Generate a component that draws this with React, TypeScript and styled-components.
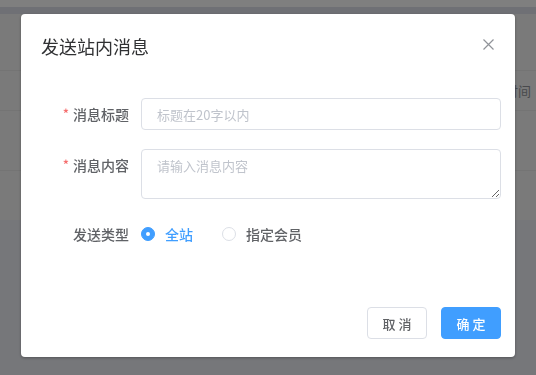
import React from "react";
import styled, { createGlobalStyle } from "styled-components";

const Global = createGlobalStyle`
  html, body { margin: 0; padding: 0; }
  body {
    width: 536px; height: 375px; overflow: hidden;
    font-family: "Noto Sans CJK SC", "Noto Sans", sans-serif;
    background: #eceef5;
  }
  * { box-sizing: border-box; }
`;

const Page = styled.div`
  width: 536px;
  height: 375px;
  display: flex;
  flex-direction: column;
  background: #eceef5;
`;

const TopStrip = styled.div`
  height: 7px;
  background: #ffffff;
`;

const NavStrip = styled.div`
  height: 7px;
  background: #dfe0ea;
`;

const Content = styled.div`
  height: 206px;
  background: #f5f5f5;
  display: flex;
  flex-direction: column;
`;

const Row = styled.div<{ $h: number; $line?: boolean }>`
  height: ${(p) => p.$h}px;
  border-bottom: ${(p) => (p.$line ? "1px solid #e8e8e8" : "none")};
  display: flex;
  align-items: center;
  justify-content: flex-end;
  padding-right: 5px;
  font-size: 13px;
  color: #909399;
`;

const Mask = styled.div`
  position: fixed;
  inset: 0;
  background: rgba(0, 0, 0, 0.5);
  padding: 14px 0 0 21px;
`;

const Dialog = styled.div`
  width: 494px;
  height: 343px;
  background: #fff;
  border-radius: 4px;
  box-shadow: 0 1px 3px rgba(0, 0, 0, 0.3);
  display: flex;
  flex-direction: column;
`;

const Header = styled.div`
  padding: 20px 20px 10px 20px;
  display: flex;
  align-items: center;
  justify-content: space-between;
`;

const Title = styled.span`
  font-size: 18px;
  line-height: 24px;
  color: #303133;
`;

const Close = styled.button`
  border: none;
  background: none;
  padding: 0;
  width: 12px;
  height: 12px;
  margin-right: 1px;
  margin-top: -4px;
  display: flex;
  align-items: center;
  justify-content: center;
  cursor: pointer;
`;

const Body = styled.div`
  padding: 30px 14px 0 20px;
  display: flex;
  flex-direction: column;
`;

const Item = styled.div<{ $mb: number }>`
  display: flex;
  align-items: flex-start;
  margin-bottom: ${(p) => p.$mb}px;
`;

const Label = styled.label`
  width: 100px;
  padding-right: 12px;
  height: 32px;
  display: flex;
  align-items: center;
  justify-content: flex-end;
  font-size: 14px;
  color: #606266;
  font-weight: 500;
`;

const Star = styled.span`
  color: #f56c6c;
  margin-right: 4px;
  font-size: 13px;
  margin-top: -2px;
`;

const Input = styled.input`
  width: 360px;
  height: 32px;
  border: 1px solid #dcdfe6;
  border-radius: 4px;
  padding: 0 15px;
  font-size: 13px;
  font-family: inherit;
  color: #606266;
  outline: none;
  &::placeholder { color: #c0c4cc; }
`;

const TextArea = styled.textarea`
  width: 360px;
  height: 50px;
  border: 1px solid #dcdfe6;
  border-radius: 4px;
  padding: 5px 15px;
  font-size: 13px;
  line-height: 21px;
  font-family: inherit;
  color: #606266;
  outline: none;
  resize: vertical;
  &::placeholder { color: #c0c4cc; }
`;

const RadioGroup = styled.div`
  height: 32px;
  display: flex;
  align-items: center;
`;

const RadioLabel = styled.label`
  display: flex;
  align-items: center;
  margin-right: 29px;
  cursor: pointer;
`;

const Dot = styled.span<{ $on: boolean }>`
  width: 14px;
  height: 14px;
  border-radius: 50%;
  border: 1px solid ${(p) => (p.$on ? "#409eff" : "#dcdfe6")};
  background: ${(p) => (p.$on ? "#409eff" : "#fff")};
  display: flex;
  align-items: center;
  justify-content: center;
  &::after {
    content: "";
    width: 4px;
    height: 4px;
    border-radius: 50%;
    background: #fff;
    display: ${(p) => (p.$on ? "block" : "none")};
  }
`;

const RadioText = styled.span<{ $on: boolean }>`
  margin-left: 10px;
  font-size: 14px;
  font-weight: 500;
  color: ${(p) => (p.$on ? "#409eff" : "#606266")};
`;

const Footer = styled.div`
  margin-top: 57px;
  padding-right: 14px;
  display: flex;
  justify-content: flex-end;
  gap: 14px;
`;

const Button = styled.button<{ $primary?: boolean }>`
  width: 60px;
  height: 32px;
  border-radius: 4px;
  font-family: inherit;
  font-size: 13px;
  font-weight: 500;
  letter-spacing: 0;
  border: 1px solid ${(p) => (p.$primary ? "#409eff" : "#dcdfe6")};
  background: ${(p) => (p.$primary ? "#409eff" : "#fff")};
  color: ${(p) => (p.$primary ? "#fff" : "#606266")};
  cursor: pointer;
  padding: 0;
`;

export default function App() {
  return (
    <>
      <Global />
      <Page>
        <TopStrip />
        <NavStrip />
        <Content>
          <Row $h={57} $line />
          <Row $h={40} $line>发送时间</Row>
          <Row $h={60} $line />
          <Row $h={49} />
        </Content>
      </Page>
      <Mask>
        <Dialog>
          <Header>
            <Title>发送站内消息</Title>
            <Close aria-label="关闭">
              <svg width="11" height="11" viewBox="0 0 11 11">
                <path d="M0.5 0.5 L10.5 10.5 M10.5 0.5 L0.5 10.5" stroke="#909399" strokeWidth="1.2" fill="none" />
              </svg>
            </Close>
          </Header>
          <Body>
            <Item $mb={19}>
              <Label><Star>*</Star>消息标题</Label>
              <Input placeholder="标题在20字以内" />
            </Item>
            <Item $mb={19}>
              <Label><Star>*</Star>消息内容</Label>
              <TextArea placeholder="请输入消息内容" />
            </Item>
            <Item $mb={0}>
              <Label>发送类型</Label>
              <RadioGroup>
                <RadioLabel>
                  <Dot $on />
                  <RadioText $on>全站</RadioText>
                </RadioLabel>
                <RadioLabel>
                  <Dot $on={false} />
                  <RadioText $on={false}>指定会员</RadioText>
                </RadioLabel>
              </RadioGroup>
            </Item>
          </Body>
          <Footer>
            <Button>取 消</Button>
            <Button $primary>确 定</Button>
          </Footer>
        </Dialog>
      </Mask>
    </>
  );
}
